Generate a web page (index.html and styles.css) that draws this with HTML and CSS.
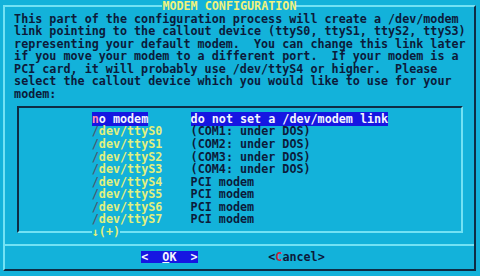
FILE: index.html
```html
<!DOCTYPE html>
<html lang="en">
<head>
  <meta charset="UTF-8">
  <title>Modem Configuration</title>
  <link rel="stylesheet" href="styles.css">
</head>
<body>
  <div class="dialog">
    <div class="title">MODEM CONFIGURATION</div>
    <p class="intro">This part of the configuration process will create a /dev/modem
link pointing to the callout device (ttyS0, ttyS1, ttyS2, ttyS3)
representing your default modem.  You can change this link later
if you move your modem to a different port.  If your modem is a
PCI card, it will probably use /dev/ttyS4 or higher.  Please
select the callout device which you would like to use for your
modem:</p>

    <div class="list">
      <div class="row selected">
        <span class="tag"><span class="label"><span class="key">n</span>o modem</span></span>
        <span class="desc"><span class="label">do not set a /dev/modem link</span></span>
      </div>
      <div class="row">
        <span class="tag"><span class="key">/</span>dev/ttyS0</span>
        <span class="desc">(COM1: under DOS)</span>
      </div>
      <div class="row">
        <span class="tag"><span class="key">/</span>dev/ttyS1</span>
        <span class="desc">(COM2: under DOS)</span>
      </div>
      <div class="row">
        <span class="tag"><span class="key">/</span>dev/ttyS2</span>
        <span class="desc">(COM3: under DOS)</span>
      </div>
      <div class="row">
        <span class="tag"><span class="key">/</span>dev/ttyS3</span>
        <span class="desc">(COM4: under DOS)</span>
      </div>
      <div class="row">
        <span class="tag"><span class="key">/</span>dev/ttyS4</span>
        <span class="desc">PCI modem</span>
      </div>
      <div class="row">
        <span class="tag"><span class="key">/</span>dev/ttyS5</span>
        <span class="desc">PCI modem</span>
      </div>
      <div class="row">
        <span class="tag"><span class="key">/</span>dev/ttyS6</span>
        <span class="desc">PCI modem</span>
      </div>
      <div class="row">
        <span class="tag"><span class="key">/</span>dev/ttyS7</span>
        <span class="desc">PCI modem</span>
      </div>
      <div class="more"><span>↓(+)</span></div>
    </div>

    <div class="separator"></div>

    <div class="buttons">
      <span class="button active">&lt;  <u>O</u>K  &gt;</span>
      <span class="button">&lt;<span class="hot">C</span>ancel&gt;</span>
    </div>
  </div>
</body>
</html>
```

FILE: styles.css
```css
:root {
  --cw: 7.06px;      /* one character cell */
  --rh: 12.545px;    /* one text row */
  --bg: #13b2da;
  --light: #72e2f4;
  --dark: #0e2c44;
  --ink: #0c1b3a;
  --yellow: #e4f07c;
  --blue: #1616e2;
}

body {
  margin: 0;
  background: var(--bg);
  color: var(--ink);
  font-family: "DejaVu Sans Mono", "Liberation Mono", monospace;
  font-size: 11.73px;
  font-weight: bold;
  line-height: var(--rh);
}

.dialog {
  box-sizing: border-box;
  width: 473px;
  height: 266px;
  margin: 5px 0 0 3px;
  border: 2px solid var(--light);
  border-right-color: var(--dark);
  border-bottom-color: var(--dark);
}

.title {
  width: fit-content;
  margin: -7px 0 0 157.4px;
  background: var(--bg);
  color: #f2f27c;
}

.intro {
  margin: 0;
  padding-left: 9.1px;
  white-space: pre;
}

.list {
  box-sizing: border-box;
  width: 446.8px;
  height: 127.5px;
  margin: 5.2px 0 0 11.6px;
  padding: 5.3px 0 0 73.2px;
  border: 2px solid var(--dark);
  border-right-color: var(--light);
  border-bottom-color: var(--light);
}

.row {
  display: flex;
  white-space: pre;
}

.tag {
  width: calc(var(--cw) * 14);
  color: var(--yellow);
}

.tag .key {
  color: #4a5a70;
}

.selected .label {
  background: var(--blue);
  color: #f4f4ff;
}

.selected .key {
  color: #ff8cb4;
}

.more {
  color: var(--yellow);
}

.more span {
  background: var(--bg);
}

.separator {
  height: 2px;
  margin-top: 10.5px;
  background: var(--light);
}

.buttons {
  display: flex;
  gap: 70.6px;
  margin-top: 5.3px;
  padding-left: 136.2px;
  white-space: pre;
}

.button.active {
  background: var(--blue);
  color: #f4f4ff;
}

.button u {
  text-underline-offset: 1px;
}

.hot {
  color: #c8283c;
}
```
